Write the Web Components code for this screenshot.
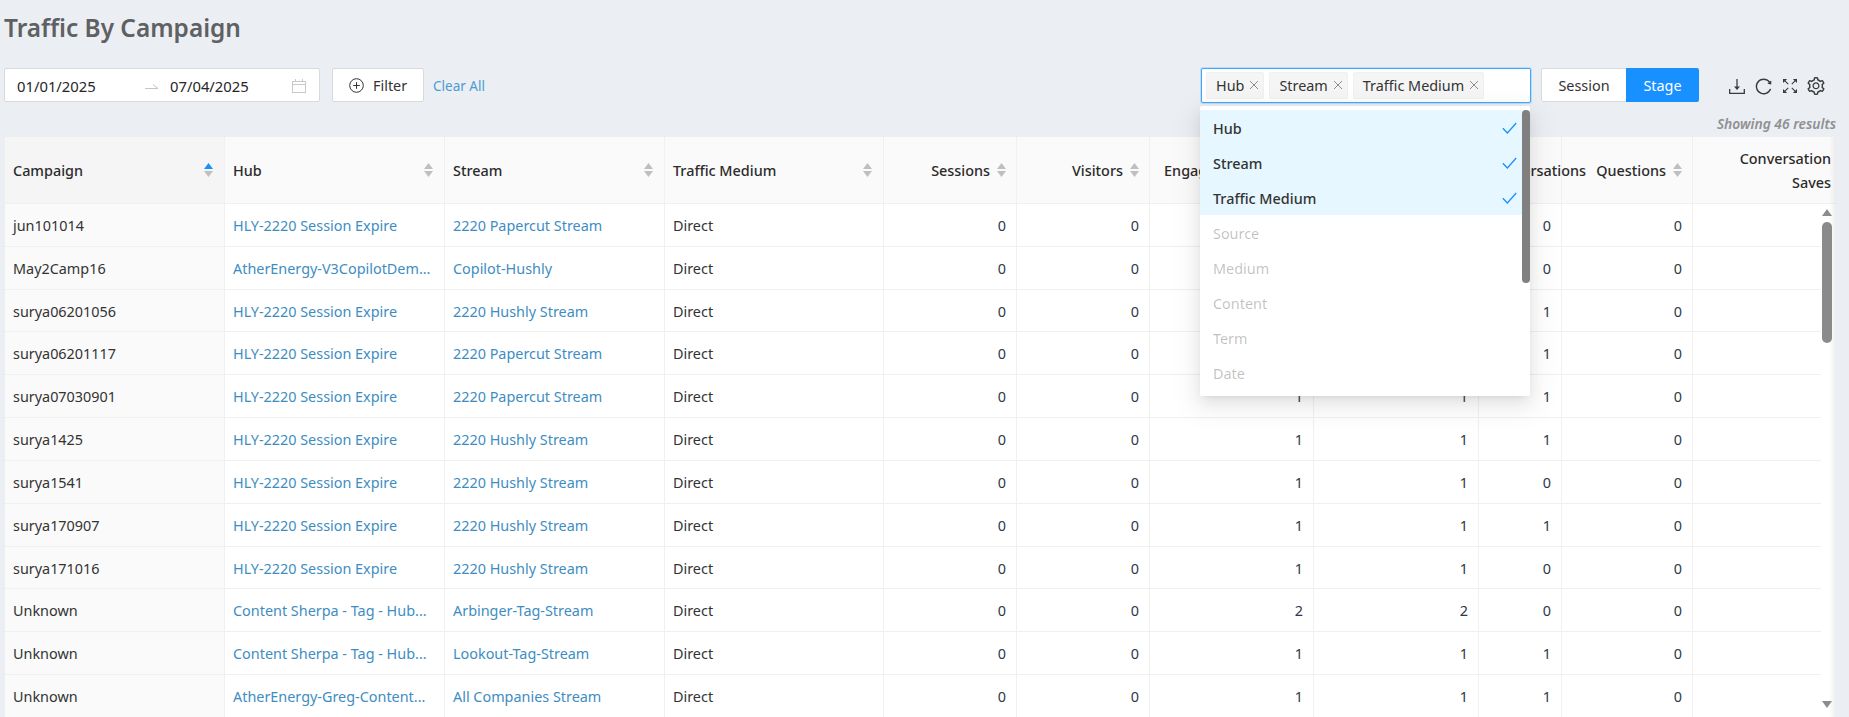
<!DOCTYPE html>
<html>
<head>
<meta charset="utf-8">
<title>Traffic By Campaign</title>
<style>
  html, body { margin: 0; height: 717px; overflow: hidden; background: #ebeef3; }
  body { font: 14.4px "Noto Sans", "Open Sans", sans-serif; color: #333; }
</style>
</head>
<body>
<tc-page>
  <tc-title slot="title">Traffic By Campaign</tc-title>
  <tc-date-range slot="left" from="01/01/2025" to="07/04/2025"></tc-date-range>
  <tc-filter-button slot="left">Filter</tc-filter-button>
  <tc-link slot="left">Clear All</tc-link>

  <tc-tag-select slot="right">
    <tc-tag>Hub</tc-tag>
    <tc-tag>Stream</tc-tag>
    <tc-tag>Traffic Medium</tc-tag>
    <tc-option slot="menu" selected>Hub</tc-option>
    <tc-option slot="menu" selected>Stream</tc-option>
    <tc-option slot="menu" selected>Traffic Medium</tc-option>
    <tc-option slot="menu" disabled>Source</tc-option>
    <tc-option slot="menu" disabled>Medium</tc-option>
    <tc-option slot="menu" disabled>Content</tc-option>
    <tc-option slot="menu" disabled>Term</tc-option>
    <tc-option slot="menu" disabled>Date</tc-option>
  </tc-tag-select>
  <tc-segmented slot="right"></tc-segmented>
  <tc-actions slot="right"></tc-actions>

  <tc-results slot="results">Showing 46 results</tc-results>
  <tc-table slot="table"></tc-table>
</tc-page>

<script>
//helper, every element below is just a template string in an open shadow root
function shadow(el, html) {
  el.attachShadow({ mode: 'open' });
  el.shadowRoot.innerHTML = html;
}

//PAGE =========================================================================
class TcPage extends HTMLElement {
  connectedCallback() {
    shadow(this, `
      <style>
        :host { display: block; padding-left: 5px; padding-right: 13px; }
        .title { height: 68px; }
        .bar { display: flex; justify-content: space-between; height: 34px; }
        .left, .right { display: flex; align-items: center; }
        .results { display: flex; justify-content: flex-end; align-items: center; box-sizing: border-box; height: 35px; padding-top: 7px; }
      </style>
      <div class="title"><slot name="title"></slot></div>
      <div class="bar">
        <div class="left"><slot name="left"></slot></div>
        <div class="right"><slot name="right"></slot></div>
      </div>
      <div class="results"><slot name="results"></slot></div>
      <slot name="table"></slot>
    `);
  }
}

class TcTitle extends HTMLElement {
  connectedCallback() {
    shadow(this, `
      <style>
        :host { display: block; margin-left: -1px; font-size: 24.4px; font-weight: 600; line-height: 56px; color: #5f6062; }
      </style>
      <slot></slot>
    `);
  }
}

//LEFT SIDE OF TOOLBAR =========================================================
class TcDateRange extends HTMLElement {
  connectedCallback() {
    shadow(this, `
      <style>
        :host { display: flex; align-items: center; box-sizing: border-box; width: 316px; height: 34px; margin-left: -1px; padding-top: 1px;
                background: #fff; border: 1px solid #d9d9d9; border-radius: 2px; font-size: 14.8px; color: #262626; padding-left: 12px; }
        .from { width: 128px; }
        .arrow { width: 13px; margin-right: 12px; display: block; }
        .to { flex: 1; }
        .cal { margin-right: 13px; display: block; }
      </style>
      <span class="from">${this.getAttribute('from')}</span>
      <svg class="arrow" width="13" height="6" viewBox="0 0 13 6"><path d="M0 5.5h13L8 1.5" fill="none" stroke="#c4c4c4"/></svg>
      <span class="to">${this.getAttribute('to')}</span>
      <svg class="cal" width="14" height="14" viewBox="0 0 14 14" fill="none" stroke="#c9c9c9"><rect x=".5" y="2.5" width="13" height="11"/><path d="M.5 5.5h13M3.5 0v3M10.5 0v3"/></svg>
    `);
  }
}

class TcFilterButton extends HTMLElement {
  connectedCallback() {
    shadow(this, `
      <style>
        :host { display: flex; align-items: center; box-sizing: border-box; width: 92px; height: 34px; margin-left: 12px;
                background: #fff; border: 1px solid #d9d9d9; border-radius: 2px; padding-left: 16px; color: #333; }
        svg { display: block; margin-right: 9px; }
      </style>
      <svg width="15" height="15" viewBox="0 0 15 15" fill="none" stroke="#333"><circle cx="7.5" cy="7.5" r="6.8"/><path d="M7.5 4.2v6.6M4.2 7.5h6.6"/></svg>
      <slot></slot>
    `);
  }
}

class TcLink extends HTMLElement {
  connectedCallback() {
    shadow(this, `
      <style>:host { display: block; margin-left: 9px; padding-top: 1px; font-size: 13.5px; color: #4b9bd1; }</style>
      <slot></slot>
    `);
  }
}

//RIGHT SIDE OF TOOLBAR ========================================================
class TcTag extends HTMLElement {
  connectedCallback() {
    shadow(this, `
      <style>
        :host { display: flex; align-items: center; box-sizing: border-box; height: 27px; padding: 0 4px 0 9px;
                background: #f5f5f5; border: 1px solid #f0f0f0; border-radius: 2px; color: #333; white-space: nowrap; }
        svg { display: block; margin-left: 5px; }
      </style>
      <slot></slot>
      <svg width="10" height="10" viewBox="0 0 10 10" stroke="#8c8c8c" fill="none"><path d="M1 1l8 8M9 1l-8 8"/></svg>
    `);
  }
}

class TcOption extends HTMLElement {
  connectedCallback() {
    const tick = this.hasAttribute('selected')
      ? '<svg width="15" height="12" viewBox="0 0 15 12" fill="none" stroke="#1890ff" stroke-width="1.3"><path d="M.8 6.2L5.4 11 14.2 1"/></svg>'
      : '';
    shadow(this, `
      <style>
        :host { display: flex; align-items: center; justify-content: space-between; box-sizing: border-box; height: 35px;
                padding: 2px 13px 0 13px; color: rgba(0,0,0,.25); }
        :host([selected]) { background: #e6f7ff; color: #333; font-weight: 500; }
        svg { display: block; margin-right: 0; }
      </style>
      <slot></slot>${tick}
    `);
  }
}

class TcTagSelect extends HTMLElement {
  connectedCallback() {
    shadow(this, `
      <style>
        :host { display: block; position: relative; box-sizing: border-box; width: 330px; height: 35px;
                background: #fff; border: 1px solid #40a9ff; border-radius: 2px; box-shadow: 0 0 0 1px rgba(24,144,255,.2); }
        .tags { display: flex; align-items: center; gap: 5px; height: 100%; padding-left: 4px; }
        .menu { position: absolute; z-index: 10; left: -2px; top: 37px; width: 330px; height: 290px; box-sizing: border-box;
                padding-top: 4px; background: #fff; border-radius: 2px; overflow: hidden;
                box-shadow: 0 3px 6px -4px rgba(0,0,0,.12), 0 6px 16px 0 rgba(0,0,0,.08), 0 9px 28px 8px rgba(0,0,0,.05); }
        .thumb { position: absolute; right: 0; top: 4px; width: 8px; height: 173px; background: #808080; border-radius: 4px; }
      </style>
      <div class="tags"><slot></slot></div>
      <div class="menu">
        <slot name="menu"></slot>
        <div class="thumb"></div>
      </div>
    `);
  }
}

class TcSegmented extends HTMLElement {
  connectedCallback() {
    shadow(this, `
      <style>
        :host { display: flex; height: 34px; margin-left: 10px; border-radius: 2px; overflow: hidden; }
        div { display: flex; align-items: center; justify-content: center; box-sizing: border-box; padding-top: 1px; }
        .off { width: 85px; background: #fff; border: 1px solid #d9d9d9; border-right: 0; border-radius: 2px 0 0 2px; color: #333; }
        .on { width: 73px; background: #1890ff; color: #fff; }
      </style>
      <div class="off">Session</div>
      <div class="on">Stage</div>
    `);
  }
}

class TcActions extends HTMLElement {
  connectedCallback() {
    shadow(this, `
      <style>
        :host { display: flex; align-items: center; margin-left: 30px; margin-right: 11px; padding-top: 2px; }
        svg { display: block; fill: #3c3c3c; }
      </style>
      <svg width="16" height="15" viewBox="0 0 16 15" style="fill:none;stroke:#3c3c3c;stroke-width:1.3"><path d="M8 0v9.5"/><path d="M8 11L5 7.5h6z" fill="#3c3c3c" stroke="none"/><path d="M.7 10v4.3h14.6V10"/></svg>
      <svg width="17" height="17" viewBox="64 64 896 896" style="margin-left:10px"><path d="M909.1 209.3l-56.4 44.1C775.8 155.1 656.2 92 521.9 92 290 92 102.3 279.5 102 511.5 101.7 743.7 289.8 932 521.9 932c181.3 0 335.8-115 394.6-276.1 1.5-4.2-.7-8.9-4.9-10.3l-56.7-19.5a8 8 0 0 0-10.1 4.8c-1.8 5-3.8 10-5.9 14.9-17.3 41-42.1 77.8-73.7 109.4A344.77 344.77 0 0 1 655.9 829c-42.3 17.9-87.4 27-133.8 27-46.5 0-91.5-9.1-133.8-27A341.5 341.5 0 0 1 279 755.2a342.16 342.16 0 0 1-73.7-109.4c-17.9-42.4-27-87.4-27-133.9s9.1-91.5 27-133.9c17.3-41 42.1-77.8 73.7-109.4 31.6-31.6 68.4-56.4 109.3-73.8 42.3-17.9 87.4-27 133.8-27 46.5 0 91.5 9.1 133.8 27a341.5 341.5 0 0 1 109.3 73.8c9.9 9.9 19.2 20.4 27.8 31.4l-60.2 47a8 8 0 0 0 3 14.1l175.6 43c5 1.2 9.9-2.6 9.9-7.7l.8-180.9c-.1-6.6-7.8-10.3-13-6.2z"/></svg>
      <svg width="14" height="14" viewBox="0 0 15 15" style="margin-left:11px;stroke:#3c3c3c;stroke-width:1.2"><path d="M1 1l4.6 4.6M14 1L9.4 5.6M1 14l4.6-4.6M14 14L9.4 9.4"/><path d="M0 0h4.4L0 4.4zM15 0h-4.4L15 4.4zM0 15h4.4L0 10.6zM15 15h-4.4L15 10.6z" stroke="none"/></svg>
      <svg width="18" height="18" viewBox="64 64 896 896" style="margin-left:10px"><path d="M924.8 625.7l-65.5-56c3.1-19 4.7-38.4 4.7-57.8s-1.6-38.8-4.7-57.8l65.5-56a32.03 32.03 0 0 0 9.3-35.2l-.9-2.6a443.74 443.74 0 0 0-79.7-137.9l-1.8-2.1a32.12 32.12 0 0 0-35.1-9.5l-81.3 28.9c-30-24.6-63.5-44-99.7-57.6l-15.7-85a32.05 32.05 0 0 0-25.8-25.7l-2.7-.5c-52.1-9.4-106.9-9.4-159 0l-2.7.5a32.05 32.05 0 0 0-25.8 25.7l-15.8 85.4a351.86 351.86 0 0 0-99 57.4l-81.9-29.1a32 32 0 0 0-35.1 9.5l-1.8 2.1a446.02 446.02 0 0 0-79.7 137.9l-.9 2.6c-4.5 12.5-.8 26.5 9.3 35.2l66.3 56.6c-3.1 18.8-4.6 38-4.6 57.1 0 19.2 1.5 38.4 4.6 57.1L99 625.5a32.03 32.03 0 0 0-9.3 35.2l.9 2.6c18.1 50.4 44.9 96.9 79.7 137.9l1.8 2.1a32.12 32.12 0 0 0 35.1 9.5l81.9-29.1c29.8 24.5 63.1 43.9 99 57.4l15.8 85.4a32.05 32.05 0 0 0 25.8 25.7l2.7.5a449.4 449.4 0 0 0 159 0l2.7-.5a32.05 32.05 0 0 0 25.8-25.7l15.7-85a350 350 0 0 0 99.7-57.6l81.3 28.9a32 32 0 0 0 35.1-9.5l1.8-2.1c34.8-41.1 61.6-87.5 79.7-137.9l.9-2.6c4.5-12.3.8-26.3-9.3-35zM788.3 465.9c2.5 15.1 3.8 30.6 3.8 46.1s-1.3 31-3.8 46.1l-6.6 40.1 74.7 63.9a370.03 370.03 0 0 1-42.6 73.6L721 702.8l-31.4 25.8c-23.9 19.6-50.5 35-79.3 45.8l-38.1 14.3-17.9 97a377.5 377.5 0 0 1-85 0l-17.9-97.2-37.8-14.5c-28.5-10.8-55-26.2-78.7-45.7l-31.4-25.9-93.4 33.2c-17-22.9-31.2-47.6-42.6-73.6l75.5-64.5-6.5-40c-2.4-14.9-3.7-30.3-3.7-45.5 0-15.3 1.2-30.6 3.7-45.5l6.5-40-75.5-64.5c11.3-26.1 25.6-50.7 42.6-73.6l93.4 33.2 31.4-25.9c23.7-19.5 50.2-34.9 78.7-45.7l37.9-14.3 17.9-97.2c28.1-3.2 56.8-3.2 85 0l17.9 97 38.1 14.3c28.7 10.8 55.4 26.2 79.3 45.8l31.4 25.8 92.8-32.9c17 22.9 31.2 47.6 42.6 73.6L781.8 426l6.5 39.9zM512 326c-97.2 0-176 78.8-176 176s78.8 176 176 176 176-78.8 176-176-78.8-176-176-176zm79.2 255.2A111.6 111.6 0 0 1 512 614c-29.9 0-58-11.7-79.2-32.8A111.6 111.6 0 0 1 400 502c0-29.9 11.7-58 32.8-79.2C454 401.6 482.1 390 512 390c29.9 0 58 11.6 79.2 32.8A111.6 111.6 0 0 1 624 502c0 29.9-11.7 58-32.8 79.2z"/></svg>
    `);
  }
}

class TcResults extends HTMLElement {
  connectedCallback() {
    shadow(this, `
      <style>:host { display: block; font-size: 13.8px; font-style: italic; font-weight: 600; color: #8f9092; }</style>
      <slot></slot>
    `);
  }
}

//TABLE ========================================================================
const HUB = 'HLY-2220 Session Expire';
const PAPER = '2220 Papercut Stream';
const HUSH = '2220 Hushly Stream';
const SHERPA = 'Content Sherpa - Tag - Hub...';
const ROWS = [
  ['jun101014', HUB, PAPER, 0, 0, 0, 0],
  ['May2Camp16', 'AtherEnergy-V3CopilotDem...', 'Copilot-Hushly', 0, 0, 0, 0],
  ['surya06201056', HUB, HUSH, 1, 1, 1, 0],
  ['surya06201117', HUB, PAPER, 1, 1, 1, 0],
  ['surya07030901', HUB, PAPER, 1, 1, 1, 0],
  ['surya1425', HUB, HUSH, 1, 1, 1, 0],
  ['surya1541', HUB, HUSH, 1, 1, 0, 0],
  ['surya170907', HUB, HUSH, 1, 1, 1, 0],
  ['surya171016', HUB, HUSH, 1, 1, 0, 0],
  ['Unknown', SHERPA, 'Arbinger-Tag-Stream', 2, 2, 0, 0],
  ['Unknown', SHERPA, 'Lookout-Tag-Stream', 1, 1, 1, 0],
  ['Unknown', 'AtherEnergy-Greg-Content...', 'All Companies Stream', 1, 1, 1, 0],
];

//sort arrows, up one is blue on the sorted column
function sorter(active) {
  return `<svg class="sort" width="9" height="14" viewBox="0 0 9 14"><path d="M4.5 0L9 6H0z" fill="${active ? '#1890ff' : '#bfbfbf'}"/><path d="M4.5 14L9 8H0z" fill="#bfbfbf"/></svg>`;
}

class TcTable extends HTMLElement {
  connectedCallback() {
    const heads = ['Campaign', 'Hub', 'Stream', 'Traffic Medium'].map((t, i) =>
      `<div class="th${i === 0 ? ' sorted' : ''}"><span>${t}</span>${sorter(i === 0)}</div>`).join('');
    const nums = ['Sessions', 'Visitors', 'Engaged Sessions', 'Engaged Visitors'].map(t =>
      `<div class="th num"><span>${t}</span>${sorter(false)}</div>`).join('');
    const rows = ROWS.map(r => `
      <div class="row">
        <div class="td first">${r[0]}</div>
        <div class="td link"><span>${r[1]}</span></div>
        <div class="td link"><span>${r[2]}</span></div>
        <div class="td">Direct</div>
        <div class="td num">0</div>
        <div class="td num">0</div>
        <div class="td num">${r[3]}</div>
        <div class="td num">${r[4]}</div>
        <div class="td num">${r[5]}</div>
        <div class="td num">${r[6]}</div>
        <div class="td"></div>
      </div>`).join('');
    shadow(this, `
      <style>
        :host { display: block; --cols: 220px 220px 220px 219px 133px 133px 164px 165px 83px 131px 1fr; }
        .head { display: grid; grid-template-columns: var(--cols); height: 67px; background: #fafafa; position: relative; }
        .head::after { content: ''; position: absolute; top: 0; right: 0; bottom: 0; width: 7px;
                       background: linear-gradient(to left, rgba(0,0,0,.06), transparent); }
        .th { display: flex; align-items: center; justify-content: space-between; gap: 7px; box-sizing: border-box;
              padding: 0 11px 0 8px; font-weight: 500; color: #2b2b2b; white-space: nowrap;
              border-right: 1px solid #f0f0f0; border-bottom: 1px solid #f0f0f0; }
        .th.sorted { background: #f5f5f5; }
        .th.num { justify-content: flex-end; padding-left: 0; padding-right: 10px; }
        .th.over span { margin-right: -35px; position: relative; }
        .th.saves { display: block; text-align: right; padding: 10px 5px 0 0; line-height: 24px; border-right: 0; white-space: normal; }
        .sort { display: block; flex: none; }
        .wrap { display: flex; height: 513px; overflow: hidden; }
        .body { width: 1816px; flex: none; background: #fff; }
        .row { display: grid; grid-template-columns: var(--cols); height: 42.83px; }
        .td { display: flex; align-items: center; box-sizing: border-box; padding: 1px 10px 0 8px; color: #333; overflow: hidden; white-space: nowrap;
              border-right: 1px solid #f0f0f0; border-bottom: 1px solid #f0f0f0; }
        .td:last-child { border-right: 0; }
        .td.first { background: #fafafa; }
        .td.link { color: #3e8dc2; }
        .td.num { justify-content: flex-end; color: #2d3848; }
        .gutter { flex: 1; display: flex; flex-direction: column; align-items: center; padding-top: 5px; padding-right: 4px;
                  box-sizing: border-box; background: linear-gradient(to left, rgba(0,0,0,.07), transparent 7px), #fff; }
        .up, .down { width: 0; height: 0; border-left: 5px solid transparent; border-right: 5px solid transparent; }
        .up { border-bottom: 7px solid #8c8c8c; }
        .thumb { width: 10px; height: 121px; margin-top: 6px; background: #8a8a8a; border-radius: 5px; }
        .down { border-top: 7px solid #8c8c8c; margin-top: 358px; }
      </style>
      <div class="head">
        ${heads}${nums}
        <div class="th num over"><span>Conversations</span></div>
        <div class="th num"><span>Questions</span>${sorter(false)}</div>
        <div class="th saves">Conversation<br>Saves</div>
      </div>
      <div class="wrap">
        <div class="body">${rows}</div>
        <div class="gutter"><div class="up"></div><div class="thumb"></div><div class="down"></div></div>
      </div>
    `);
  }
}

//=========================================================================
customElements.define('tc-page', TcPage);
customElements.define('tc-title', TcTitle);
customElements.define('tc-date-range', TcDateRange);
customElements.define('tc-filter-button', TcFilterButton);
customElements.define('tc-link', TcLink);
customElements.define('tc-tag', TcTag);
customElements.define('tc-option', TcOption);
customElements.define('tc-tag-select', TcTagSelect);
customElements.define('tc-segmented', TcSegmented);
customElements.define('tc-actions', TcActions);
customElements.define('tc-results', TcResults);
customElements.define('tc-table', TcTable);
</script>
</body>
</html>
